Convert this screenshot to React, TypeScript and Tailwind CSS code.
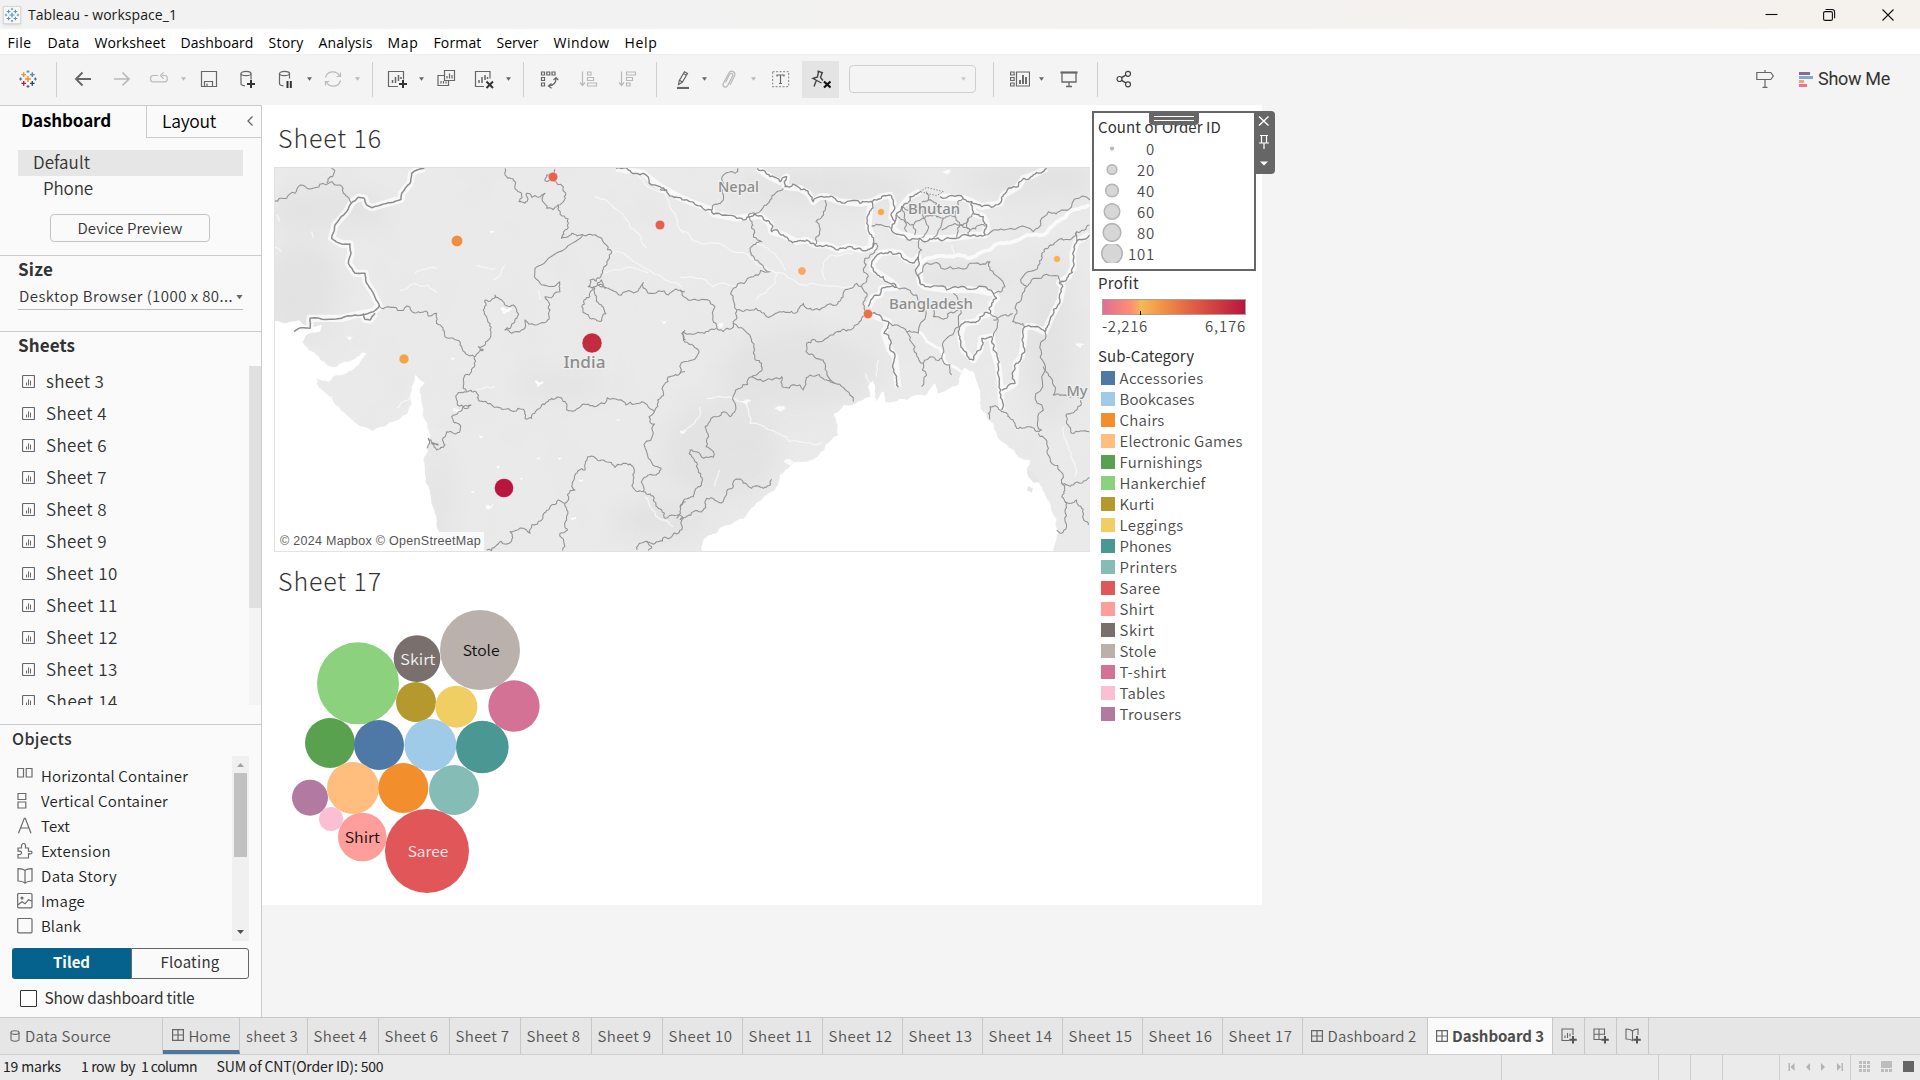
import React, { useLayoutEffect, useRef, useState } from "react";

/* ---------- text helper: tracks a label out to a given advance width ---------- */
function Fit({ w, children, className = "" }: { w: number; children: string; className?: string }) {
  const ref = useRef<HTMLSpanElement>(null);
  const [ls, setLs] = useState<number | null>(null);
  useLayoutEffect(() => {
    if (ref.current && ls === null) {
      const natural = ref.current.getBoundingClientRect().width;
      setLs((w - natural) / children.length);
    }
  }, [ls, w, children]);
  return (
    <span ref={ref} className={"inline-block whitespace-pre " + className} style={{ letterSpacing: ls === null ? undefined : ls + "px" }}>
      {children}
    </span>
  );
}

const TABLEAU = "font-['Noto_Sans_CJK_SC','Noto_Sans',sans-serif]";
const SEGOE = "font-['Open_Sans','Noto_Sans',sans-serif]";

/* ---------- icons ---------- */
function Ico({ children, c = "#666", className = "" }: { children: React.ReactNode; c?: string; className?: string }) {
  return (
    <svg width="20" height="20" viewBox="0 0 20 20" fill="none" stroke={c} strokeWidth="1.2" className={"shrink-0 " + className}>
      {children}
    </svg>
  );
}
function Caret({ className = "", c = "#666" }: { className?: string; c?: string }) {
  return (
    <svg width="7" height="4" viewBox="0 0 7 4" className={"shrink-0 " + className}>
      <path d="M1 0.3h5L3.5 3.7z" fill={c} />
    </svg>
  );
}
function Sep({ className = "" }: { className?: string }) {
  return <div className={"h-[35px] w-px shrink-0 bg-[#cfcfcf] " + className} />;
}
function Plus({ x, y, r, c, w = 1.4 }: { x: number; y: number; r: number; c: string; w?: number }) {
  return <path d={`M${x - r} ${y}h${r * 2}M${x} ${y - r}v${r * 2}`} stroke={c} strokeWidth={w} />;
}
function TableauMark({ mono = false }: { mono?: boolean }) {
  const p = (c: string) => (mono ? "#5b97bd" : c);
  return (
    <>
      <Plus x={10} y={10} r={3} c={p("#eb912b")} w={1.5} />
      <Plus x={5.7} y={5.6} r={2.3} c={p("#eb912b")} />
      <Plus x={14.3} y={5.6} r={2.3} c={p("#59879b")} />
      <Plus x={5.7} y={14.4} r={2.3} c={p("#c72035")} />
      <Plus x={14.3} y={14.4} r={2.3} c={p("#1f447e")} />
      <Plus x={10} y={2.6} r={1.5} c={p("#7099a6")} w={1.1} />
      <Plus x={10} y={17.4} r={1.5} c={p("#5b6591")} w={1.1} />
      <Plus x={2.6} y={10} r={1.5} c={p("#5c6692")} w={1.1} />
      <Plus x={17.4} y={10} r={1.5} c={p("#5c6692")} w={1.1} />
    </>
  );
}

function TitleBar() {
  return (
    <div className="flex h-[29px] shrink-0 items-center bg-gradient-to-r from-[#f2f2f2] from-30% to-[#f5f1ed]">
      <div className="ml-[3px] flex h-[18px] w-[18px] items-center justify-center border border-[#d8d8d8] bg-[#f7f7f7] shadow-sm">
        <svg width="16" height="16" viewBox="0 0 20 20"><TableauMark mono /></svg>
      </div>
      <div className={"ml-[7px] text-[14px] leading-[28px] text-[#191919] " + SEGOE}><Fit w={149}>Tableau - workspace_1</Fit></div>
      <svg className="ml-auto mr-[25px]" width="130" height="14" viewBox="0 0 130 14" fill="none" stroke="#111" strokeWidth="1.1">
        <path d="M0.5 6.5h12" />
        <rect x="58.6" y="3.6" width="8.8" height="8.8" rx="1.5" />
        <path d="M60.6 1.5h6.4q2.6 0 2.6 2.6v6.2" />
        <path d="M117.5 1.5l11 11M128.5 1.5l-11 11" />
      </svg>
    </div>
  );
}

const menus: [string, number][] = [
  ["File", 24], ["Data", 32], ["Worksheet", 71], ["Dashboard", 73], ["Story", 35], ["Analysis", 54],
  ["Map", 31], ["Format", 48], ["Server", 42], ["Window", 56], ["Help", 33],
];
const menuSlots = ["w-[40px]", "w-[47px]", "w-[86px]", "w-[88px]", "w-[50px]", "w-[69px]", "w-[46px]", "w-[63px]", "w-[57px]", "w-[71px]", "w-[60px]"];

function MenuBar() {
  return (
    <div className={"flex h-[25px] shrink-0 items-center bg-white pl-[7.5px] pt-[2px] text-[14px] leading-[23px] text-black " + SEGOE}>
      {menus.map(([t, w], i) => (
        <div key={t} className={"shrink-0 " + menuSlots[i]}><Fit w={w}>{t}</Fit></div>
      ))}
    </div>
  );
}

function Toolbar() {
  const off = "#b9b9b9";
  return (
    <div className="flex h-[51px] shrink-0 items-center border-t border-[#ededed] bg-[#f4f4f4] pb-[2px]">
      <Ico className="ml-[18px]"><TableauMark /></Ico>
      <Sep className="ml-[18px]" />
      <Ico className="ml-4"><path d="M18 10H3M9.5 3.5L3 10l6.500 6.500" strokeWidth="1.9" /></Ico>
      <Ico className="ml-[19px]" c={off}><path d="M2 10h15M10.500 3.500L17 10l-6.500 6.500" strokeWidth="1.7" /></Ico>
      <Ico className="ml-[17px]" c={off}><path d="M9 6h-5q-2.500 0-2.500 3.200t2.500 3.200h12q2.300 0 2.300-3.200t-2.300-3.200h-3M14.500 9.300L11.500 6l3-3.200" transform="translate(0 .5)" /></Ico>
      <Caret className="ml-[11px]" c={off} />
      <Ico className="ml-3"><path d="M2.500 2.500h15v15h-15zM5.500 17.500v-5h8v5M8 17v-2.500" /></Ico>
      <Ico className="ml-[19px]"><ellipse cx="8" cy="4.500" rx="5" ry="2.200" /><path d="M3 4.500v10q0 2 4 2.300M13 4.500v6" /><path d="M13 11v8M9 15h8" stroke="#333" strokeWidth="2" /></Ico>
      <Ico className="ml-[17px]"><ellipse cx="9.500" cy="4.500" rx="5" ry="2.200" /><path d="M4.500 4.500v10q0 2 4 2.300M14.500 4.500v5" /><path d="M12.500 12v7M15.800 12v7" stroke="#333" strokeWidth="2" /></Ico>
      <Caret className="ml-[11px]" />
      <Ico className="ml-[10px]" c={off}><path d="M2.500 8.500a7.500 7.500 0 0 1 14-1.500M17.500 3.500v4h-4M17.500 11.500a7.500 7.500 0 0 1-14 1.500M2.500 16.500v-4h4" /></Ico>
      <Caret className="ml-[11px]" c={off} />
      <Sep className="ml-[11px]" />
      <Ico className="ml-[14px]"><path d="M11 17.500h-9.500v-15h15v8" /><path d="M5.500 14v-3M8.500 14V8M11.500 12V6M14 10V8" strokeWidth="1.500" /><path d="M16 11v8M12 15h8" stroke="#333" strokeWidth="2" /></Ico>
      <Caret className="ml-[11px]" />
      <Ico className="ml-[11px]"><path d="M8.500 1.500h10v10h-10zM8.500 6.500h-6.500v10h10.500v-5" /><path d="M11 9.500v-2.500M13.500 9.500v-5M16 9.500v-3.500M5 14.500v-2.500M7.500 14.500v-2.500M10 14.500v-2" strokeWidth="1.200" /></Ico>
      <Ico className="ml-[18px]"><path d="M10 17.500h-8.500v-15h14.500v7" /><path d="M5 14v-3M8 14V8M11 11V6M13.500 10V8" strokeWidth="1.500" /><path d="M12.500 12.500l6.500 6.500M19 12.500l-6.500 6.500" stroke="#333" strokeWidth="2" /></Ico>
      <Caret className="ml-[11px]" />
      <Sep className="ml-[11px]" />
      <Ico className="ml-[15px]"><path d="M2.500 3h3v3h-3zM7.800 3h3v3h-3zM13 3h3v3h-3zM2.500 8.500h3v3h-3zM2.500 14h3v3h-3z" /><path d="M17 9.500q0 6.500-7 7.500M14.500 11l2.500-2.500 2.300 2.500M12.500 14.500l-3 2.500 3 2.200" /></Ico>
      <Ico className="ml-5" c={off}><path d="M3.500 2.500v14M1 13.500l2.500 3 2.500-3M8.500 3h3.500v3h-3.500zM8.500 8.500h6v3h-6zM8.500 14h9v3h-9z" /></Ico>
      <Ico className="ml-[19px]" c={off}><path d="M3.500 2.500v14M1 13.500l2.500 3 2.500-3M8.500 3h9v3h-9zM8.500 8.500h6v3h-6zM8.500 14h3.500v3h-3.500z" /></Ico>
      <Sep className="ml-[18px]" />
      <Ico className="ml-4"><path d="M4 19h12" strokeWidth="2.200" /><path d="M5.500 15.500l.8-4 5.200-8.700 3 1.700-5.200 8.800-3.800 2.200zM6.500 11.300l2.800 1.800M10.500 4.500l3 1.700" /></Ico>
      <Caret className="ml-2" />
      <Ico className="ml-[11px]" c={off}><path d="M6.500 13.500l4-8q1-1.800 2.500-1t.6 2.600l-5 9.500q-1.500 2.300-3.400 1.300t-1-3.200l5.500-10.500q1.800-3 4.500-1.600t1.300 4.500l-4.500 9" /></Ico>
      <Caret className="ml-[11px]" c={off} />
      <Ico className="ml-[13px]"><rect x="2.600" y="2.600" width="16" height="15" strokeDasharray="2 1.500" stroke="#999" /><path d="M7 7.500v-1.500h7v1.500M10.500 6v8.500M9 14.500h3" /></Ico>
      <div className="ml-3 flex h-[37px] w-[37px] shrink-0 items-center justify-center bg-[#e4e4e4]">
        <Ico c="#444"><path d="M6.500 1.800l5.500 2.200M7.500 2.500l-1 5.500-4.500 1.500 8.500 4.500M11 4l-1.500 4.500 2.500 3M5.500 11l-2.500 6.500" strokeWidth="1.400" /><path d="M13 12.500l6.500 6M19.500 12.500l-6.500 6" stroke="#111" strokeWidth="2.200" /></Ico>
      </div>
      <div className="ml-[10px] flex h-[28px] w-[127px] shrink-0 items-center justify-end rounded-sm border border-[#d0d0d0] pr-2"><Caret c="#c8c8c8" /></div>
      <Sep className="ml-[17px]" />
      <Ico className="ml-4"><path d="M.6 3h3.500v3h-3.500zM.6 8.500h3.500v3h-3.500zM.6 14h3.500v3h-3.500zM6.500 3h13v14h-13z" /><path d="M10 15v-4M13 15v-9M16 15v-7" strokeWidth="1.900" /></Ico>
      <Caret className="ml-2" />
      <Ico className="ml-[14px]"><path d="M1.500 3.500h17" strokeWidth="2.200" /><path d="M3 4v9h14v-9M10 13v4.500M7 17.500h6" strokeWidth="1.300" /></Ico>
      <Sep className="ml-[18px]" />
      <Ico className="ml-4" c="#444"><circle cx="5.500" cy="10" r="2.500" /><circle cx="14" cy="4.800" r="2.500" /><circle cx="14" cy="15.300" r="2.500" /><path d="M7.700 8.700l4-2.600M7.700 11.300l4.100 2.600" strokeWidth="1.400" /></Ico>
      <Ico className="ml-auto"><path d="M1.800 3.500h14l2.500 3.500-2.500 3.500h-14zM10 1v2.500M10 10.500v7.500M7.500 18.300h5" /></Ico>
      <svg className="ml-6 shrink-0" width="14" height="16" viewBox="0 0 14 16"><path d="M0 1h11v3H0z" fill="#856a94" /><path d="M0 5h14v3H0z" fill="#86a5cf" /><path d="M0 9h5v3H0z" fill="#f0a37c" /><path d="M0 13h8v3H0z" fill="#f7707f" /></svg>
      <div className="ml-[5px] mr-[30px] font-['Roboto',sans-serif] text-[18px] leading-6 text-[#333]"><Fit w={72}>Show Me</Fit></div>
    </div>
  );
}

/* ---------- side panel ---------- */
const sheets = ["sheet 3", "Sheet 4", "Sheet 6", "Sheet 7", "Sheet 8", "Sheet 9", "Sheet 10", "Sheet 11", "Sheet 12", "Sheet 13", "Sheet 14"];

const objects: [string, number, React.ReactNode][] = [
  ["Horizontal Container", 147, <path d="M.7 1.500h5.800v8.500H.7zM9.200 1.500h5.800v8.500H9.200z" />],
  ["Vertical Container", 127, <path d="M1 1.500h7.800v6H1zM1 10h7.800v6H1z" />],
  ["Text", 29, <path d="M1.500 16.300L7.300 1.300h1l5.700 15M3.600 11h8.300" />],
  ["Extension", 70, <path d="M1 6h3.500q-.5-4.300 2-4.500t2 4.500h3v3.500q3.500-.8 3.500 1t-3.500 1.200v4.300H1v-3.500q3.500.3 3.500-1.700T1 9.200z" />],
  ["Data Story", 76, <path d="M8 3.700v12.500M8 3.700q-2-2-7-2v12.300q5 .2 7 2.200q2-2 7-2.200V1.700q-5 0-7 2z" />],
  ["Image", 44, <><rect x=".7" y="1.500" width="14.300" height="14.300" rx="1" /><path d="M1 12.800l4-3 3 2 3.500-4 3.500 1.500" /><circle cx="5" cy="6" r="1" fill="#666" /></>],
  ["Blank", 40, <rect x=".7" y="1.500" width="14.300" height="14.300" rx="1" />],
];

function SidePanel() {
  return (
    <div className={"flex w-[262px] shrink-0 flex-col border-r border-t border-[#cbcbcb] bg-[#fafafa] text-[#333] " + TABLEAU}>
      <div className="flex h-[32px] shrink-0 leading-[28px]">
        <div className="w-[146px] pl-[21px] text-[17px] font-bold text-black"><Fit w={90}>Dashboard</Fit></div>
        <div className="flex flex-1 items-center border-b border-l border-[#cbcbcb] pl-[15px] text-[17.5px] font-[350] text-black">
          <Fit w={54} className="pb-px">Layout</Fit>
          <svg className="ml-auto mr-[7px] mb-[2px]" width="8" height="12" viewBox="0 0 8 12"><path d="M6.500 1.500L2 6l4.500 4.500" fill="none" stroke="#666" strokeWidth="1.300" /></svg>
        </div>
      </div>
      <div className="mx-[18px] mt-[12px] h-[26px] shrink-0 bg-[#e6e6e6] pl-[15px] text-[17px] font-[350] leading-[23px]"><Fit w={57}>Default</Fit></div>
      <div className="h-[26px] shrink-0 pl-[43px] text-[17px] font-[350] leading-[23px]"><Fit w={50}>Phone</Fit></div>
      <div className="ml-[50px] mt-[12px] flex h-[28px] w-[160px] shrink-0 items-center justify-center rounded-sm border border-[#c4c4c4] text-[15px] font-[350] leading-[26px]"><Fit w={105}>Device Preview</Fit></div>
      <div className="mt-[13px] h-[76px] shrink-0 border-t border-[#cbcbcb] px-[18px]">
        <div className="h-[28px] text-[17px] font-bold leading-[26px]"><Fit w={35}>Size</Fit></div>
        <div className="flex h-[26px] items-center border-b border-[#bdbdbd] text-[15px] font-[350] leading-[24px]">
          <Fit w={214} className="ml-px pb-[2px]">Desktop Browser (1000 x 80...</Fit>
          <Caret className="ml-[3px] scale-125" />
        </div>
      </div>
      <div className="h-[35px] shrink-0 border-t border-[#cbcbcb] pl-[18px] text-[17px] font-bold leading-[26px]"><Fit w={57}>Sheets</Fit></div>
      <div className="flex h-[339px] shrink-0 overflow-hidden">
        <div className="flex-1">
          {sheets.map((s) => (
            <div key={s} className="flex h-[32px] items-center">
              <svg className="mb-px ml-[22px] mr-[11px] shrink-0" width="13" height="13" viewBox="0 0 13 13" fill="none" stroke="#666"><rect x=".5" y=".5" width="12" height="12" rx="1" strokeWidth="1.200" /><path d="M4.500 10.500v-3M6.500 10.500v-6M8.500 10.500v-5" /></svg>
              <span className="pb-[2px] text-[17px] font-[350] leading-[30px]"><Fit w={s.length > 7 ? 72 : s === "sheet 3" ? 58 : 61}>{s}</Fit></span>
            </div>
          ))}
        </div>
        <div className="w-3 bg-[#f4f4f4]"><div className="h-[242px] bg-[#e0e0e0]" /></div>
      </div>
      <div className="mt-[19px] h-[32px] shrink-0 border-t border-[#cbcbcb] pl-[12px] text-[16px] font-medium leading-[27px]"><Fit w={60}>Objects</Fit></div>
      <div className="flex h-[185px] shrink-0">
        <div className="flex-1 overflow-hidden pt-[7px]">
          {objects.map(([t, w, ic]) => (
            <div key={t} className="flex h-[25px] items-center">
              <svg className="ml-[17px] mr-2 shrink-0" width="16" height="17" viewBox="0 0 16 17" fill="none" stroke="#6b6b6b" strokeWidth="1.200">{ic}</svg>
              <span className="pb-px text-[15px] font-[350] leading-[23px] text-[#222]"><Fit w={w}>{t}</Fit></span>
            </div>
          ))}
        </div>
        <div className="mr-[12px] flex w-[17px] flex-col items-center bg-[#f0f0f0]">
          <svg width="17" height="17"><path d="M5 11h7l-3.500-4z" fill="#a3a3a3" /></svg>
          <div className="h-[84px] w-[13px] bg-[#c1c1c1]" />
          <svg className="mt-auto" width="17" height="17"><path d="M5 6h7l-3.500 4z" fill="#505050" /></svg>
        </div>
      </div>
      <div className="ml-3 mt-[7px] flex h-[31px] w-[237px] shrink-0 text-[15px] leading-[28px]">
        <div className="w-[119px] rounded-l-[3px] bg-[#05628c] text-center font-bold text-white"><Fit w={37}>Tiled</Fit></div>
        <div className="flex-1 rounded-r-[3px] border border-[#666] text-center leading-[26px]"><Fit w={59}>Floating</Fit></div>
      </div>
      <div className="mt-[9px] flex h-[20px] shrink-0 items-center">
        <div className="ml-[20px] mr-[7.5px] h-[17px] w-[17px] rounded-[1px] border border-[#333] bg-white" />
        <span className="pb-[2px] text-[15.5px] leading-[18px]"><Fit w={150}>Show dashboard title</Fit></span>
      </div>
    </div>
  );
}

/* ---------- map ---------- */
function makeRng(seed: number) {
  let s = seed;
  return () => {
    s = (s * 1103515245 + 12345) % 2147483648;
    return s / 2147483648 - 0.5;
  };
}
/* roughens a polyline by repeated midpoint displacement */
function rough(points: string, amount: number): string {
  let pts = points.split(" ").map((p) => p.split(",").map(Number));
  const rnd = makeRng(Math.round(pts[0][0] * 31 + pts[0][1] * 17 + pts.length) + 9000);
  for (let k = 0; k < 3; k++) {
    const out: number[][] = [];
    for (let i = 0; i < pts.length - 1; i++) {
      const [x1, y1] = pts[i];
      const [x2, y2] = pts[i + 1];
      out.push(pts[i]);
      const d = Math.hypot(x2 - x1, y2 - y1);
      if (d > 7) {
        const o = rnd() * d * amount;
        out.push([(x1 + x2) / 2 - ((y2 - y1) / d) * o, (y1 + y2) / 2 + ((x2 - x1) / d) * o]);
      }
    }
    out.push(pts[pts.length - 1]);
    pts = out;
  }
  return pts.map((p) => p[0].toFixed(1) + "," + p[1].toFixed(1)).join(" ");
}

const westBorders = [
  "28,275 65,265 105,225 165,222 200,215 225,225 235,250 258,278", "200,175 203,200 185,220",
  "343,588 370,590 425,588 460,605 490,618 515,610 530,650 550,685 590,710 628,740 630,765 600,795 605,845",
  "628,740 655,720 640,710 670,690 675,640 658,610 660,570 690,555 710,570 745,585 755,605 745,640 720,660 740,670 780,630 840,638 855,600 840,560 885,545 885,515",
  "955,375 920,370 890,385 900,360 910,340 880,300 878,285",
  "720,175 725,200 750,225 770,250 762,275 780,280 785,250 820,262 840,250 845,295 878,285 898,270 895,230 865,210 840,212 845,195 870,178",
  "955,375 1010,385 1040,425 1025,455 1008,500 975,510 970,530 990,530 1010,510 1020,535 1000,525 1040,540 1100,545 1135,518 1150,550 1210,555 1260,545",
  "985,530 975,560 957,570 960,610 975,625 1010,632 1023,610 1010,585 990,555 985,530",
  "605,845 575,855 578,885 618,885 580,905 560,920 585,945 575,970 545,965 540,1005 515,1020 500,1000 520,1005 490,985 485,1015",
  "605,845 632,845 640,870 680,885 715,898 775,898 780,925 800,925 830,885 860,865 890,865 905,900 950,885 1000,885 1060,870 1110,882 1130,875 1168,905",
  "1260,785 1240,795 1210,800 1195,850 1178,870 1168,905 1152,920 1165,970 1150,1045 1188,1075 1180,1090 1150,1095 1135,1145 1110,1140 1108,1080 1090,1065 1050,1072 1010,1050 968,1040 960,1080 930,1095 920,1130 930,1140 900,1180 880,1170 850,1200 830,1230 800,1245 795,1270 735,1265 733,1300 690,1310 665,1320",
  "900,1180 905,1230 908,1260 885,1270 893,1322",
  "1135,1145 1165,1170 1190,1200 1200,1225 1255,1225 1250,1245 1220,1280 1180,1295 1160,1300 1120,1305 1115,1320",
  "1260,660 1250,670 1262,690", "1235,1225 1245,1190 1262,1175", "1145,1295 1160,1310 1150,1322",
];
const westSmooth = ["885,515 870,528 830,525 808,500 810,475 850,445 930,395 955,375"];
const westFrontier = [
  "478,175 455,180 440,190 435,220 410,250 408,268 370,278 320,293 305,285 298,265 280,262 260,278 245,305 210,345 200,385 230,402 255,402 258,430 250,460 270,490 300,490 303,515 325,550 343,588 325,605 270,615 230,625 135,625 135,655 100,656 88,665",
  "295,610 300,628 315,630 330,610",
];
const eastBorders = [
  "175,55 165,70 125,85 130,150 100,165 95,180", "310,115 270,150 240,185 205,200", "435,150 430,185 408,215 420,240 405,285",
  "575,230 605,225 635,235", "915,255 970,240 1060,245 1105,185 1150,180 1230,150",
  "1228,225 1190,245 1150,270 1110,285 1085,310 1080,340 1025,385 1040,410", "1190,245 1190,275",
  "1040,410 1065,385 1135,378 1138,398", "1040,410 1010,460 998,515 1035,530",
  "720,400 730,350 760,340 830,355 870,340 930,335 930,360 975,410 940,430", "720,268 725,300 715,320",
  "930,490 940,560", "940,510 970,495 998,490", "650,412 710,435 715,550 680,545",
  "625,515 680,545 705,590 730,640 725,710", "730,640 750,620 785,625 815,675", "785,625 795,570 835,510 820,430",
  "740,445 760,500 800,505 835,480",
  "205,200 215,235 245,275 210,295 225,330 270,365 220,380 160,415 170,480",
  "170,480 215,480 260,500 300,485 345,490 370,460 400,480 470,465 490,430 530,400 545,410",
  "590,280 580,310 555,325 550,360 565,380 545,410 555,450 555,480 545,505 510,540 470,545 420,575 380,580 378,605 400,615 435,640 465,700 510,735 520,755",
  "0,420 50,450 105,470 108,520 130,545 155,535 160,515 170,480", "108,535 60,548 10,545 10,570 55,600 50,620 0,670",
  "160,520 215,575 220,610 245,640 215,680 285,685 305,680 310,712 370,720 390,675 440,690 465,700",
  "215,680 180,715 165,760 150,800 100,800 75,830 78,890 100,905 100,922 50,905 30,900 35,920 55,960 60,1010 40,1040 0,1070",
  "0,1110 40,1085 70,1080 80,1045 130,1055 140,1025 160,1010 160,995 185,990 215,1015 250,1015 275,988",
  "1095,545 1083,600 1085,680 1090,780 1085,840 1070,845 1050,830 1010,835 990,805 965,785 930,770 925,790 930,808",
  "1075,850 1100,880 1115,940 1145,1000 1145,1040 1160,1060 1155,1110 1145,1150 1130,1140",
  "1145,1000 1180,1005 1228,982", "1155,1055 1190,1050 1210,1090 1225,1125",
  "1090,650 1110,680 1120,735 1160,738 1200,745 1190,780 1158,795 1160,820 1175,850 1228,845",
  "665,170 690,180 720,165 730,205 700,225 675,215 665,170", "720,165 745,150 770,160 765,195 730,205 745,235 725,262",
  "765,195 790,205 780,235 760,262", "700,225 705,255", "675,215 680,245", "650,195 675,215", "790,205 825,200 835,165 850,145", "825,200 840,225 830,262",
  "840,225 865,205 880,190", "865,205 870,240 900,225 918,228", "785,240 840,225 870,240 865,258", "745,150 740,125",
];
const eastFrontier = [
  "-60,118 -40,120 0,143 30,155 95,180 100,192 170,205 205,200 240,197 270,220 275,245 310,255 350,275 380,270 405,285 440,285 475,300 505,290 545,300 575,295 590,280",
  "-192,55 -150,62 -110,70 -60,110 -40,120",
  "232,55 270,80 300,95 320,80 315,110 360,115 385,130 400,155 420,140 440,140 480,155 540,160 575,155 605,140 630,135 640,160 635,200 645,215",
  "575,155 568,190 565,230 575,255 575,295",
  "720,125 690,140 665,170 650,190 645,215 635,235 665,255 720,265 760,265 810,265 880,255 915,255 920,225 910,200 880,190 875,155 850,145 780,140",
  "875,155 905,170 960,160 970,135 1015,110 1030,85 1060,75 1100,55",
  "1228,255 1190,275 1178,310 1180,350 1165,380 1138,398 1148,410 1140,450 1110,510 1095,545 1060,530 1035,530",
  "1035,530 1030,580 1025,620 1008,640 1005,700 980,715 965,720",
  "565,470 580,440 600,435 605,415 650,412 640,400 610,380 580,360 575,340 600,310 630,305 660,310 680,330 705,335 715,320 720,400 735,410 800,420 870,418 940,430 950,445 935,460 930,490 900,500 890,515 850,520 840,560 850,600 880,630 900,600 905,565 935,560 940,600 955,650 962,720 965,780",
  "565,490 625,515 612,550 630,600 645,620 650,680 655,712",
];
const westSea = "20,635 60,640 105,632 135,655 170,645 165,665 120,680 112,695 130,720 165,750 215,770 250,755 290,728 305,732 280,765 250,785 215,795 190,815 155,803 155,820 200,865 245,915 285,948 325,962 355,950 400,930 428,910 440,880 440,830 450,795 465,810 480,818 465,835 470,880 475,920 492,965 490,1010 478,1040 480,1090 495,1150 510,1210 520,1260 530,1335 20,1335";
const eastSea = "65,1215 70,1170 110,1150 160,1120 210,1080 260,1035 300,975 350,935 420,910 455,870 475,855 470,820 462,790 490,765 530,758 570,740 565,715 580,690 590,755 610,725 615,755 640,755 680,750 740,735 765,700 770,730 800,720 835,705 845,670 855,652 880,665 895,710 900,760 920,800 950,850 980,885 1010,915 1050,930 1040,960 1060,975 1085,1010 1110,1060 1130,1110 1135,1150 1120,1215";
const westRivers = ["990,260 1040,285 1090,335 1120,370 1145,415", "1040,425 1100,450 1150,480 1200,510 1250,530", "1120,200 1200,250 1220,300 1245,360 1260,370", "405,540 450,520 490,525 515,548", "450,490 480,478 515,475", "635,468 690,475", "720,465 705,495 685,510", "1010,490 1060,480 1110,475 1150,490", "635,840 690,830", "395,895 430,870 438,850", "1140,1160 1190,1230 1225,1250", "820,540 825,570", "35,315 42,335", "140,365 145,385", "30,410 50,425"];
const eastRivers = ["0,240 60,280 150,300 220,330 270,360 290,370 285,400 230,450", "285,370 340,390 420,405 520,410", "230,280 290,320 315,360", "520,310 450,315 430,340 435,390", "200,760 210,820 270,840 330,875 425,878", "0,850 30,830 60,770", "80,745 190,755", "1150,830 1160,880 1185,940 1185,980", "0,380 50,385 100,410 180,412", "815,285 820,320", "595,630 590,680", "555,670 570,700", "120,960 105,1010"];
const lakes = [[255, 682, 9], [725, 600, 12], [820, 820, 10], [580, 900, 9], [675, 1190, 8], [700, 1070, 6], [650, 980, 5], [925, 1225, 6], [1255, 965, 7], [680, 365, 5], [885, 1045, 4], [1060, 930, 4], [770, 1105, 5], [565, 745, 4], [820, 1045, 4], [950, 1110, 5], [1200, 635, 8], [625, 1145, 4], [200, 860, 3]];
const eastLakes = [[200, 755, 11], [300, 775, 11], [1200, 585, 9], [120, 525, 9], [800, 65, 9], [330, 935, 13]];

const marks: [number, number, number, string][] = [
  [553, 177, 4.8, "#e9634a"], [457, 241, 5.8, "#ee8f44"], [404, 359, 5, "#f1a44b"], [592, 343, 10, "#c22c3f"], [504, 488, 9.6, "#b8163f"],
  [660, 225, 4.8, "#e55f4a"], [802, 271, 4.2, "#fda466"], [881, 212, 3.5, "#f4a84a"], [868, 314, 4.7, "#ee6f46"], [1057, 259, 3.5, "#f5b24f"],
];
const places: [string, number, number, number, number][] = [
  ["India", 563.5, 367.5, 42, 17], ["Nepal", 718, 192, 41, 15], ["Bhutan", 908, 214, 52, 15], ["Bangladesh", 889, 308.5, 84, 15], ["My", 1066.5, 395.5, 21, 15],
];

function SheetMap() {
  return (
    <div className="relative ml-3 h-[385px] w-[816px] overflow-hidden border border-r-0 border-[#e2e2e2]">
      <svg width="816" height="384" viewBox="275 168 816 384" className="block">
        <defs>
          <filter id="soft" x="-50%" y="-50%" width="200%" height="200%"><feGaussianBlur stdDeviation="12" /></filter>
          <filter id="relief" x="0" y="0" width="100%" height="100%">
            <feTurbulence type="fractalNoise" baseFrequency="0.022" numOctaves="4" seed="4" />
            <feColorMatrix values="0 0 0 0 .72  0 0 0 0 .72  0 0 0 0 .72  1.200 0 0 0 -.52" />
          </filter>
        </defs>
        <rect x="270" y="160" width="830" height="400" fill="#eaeaea" />
        <g filter="url(#soft)" fill="#e3e3e3">
          <ellipse cx="300" cy="290" rx="40" ry="50" /><ellipse cx="330" cy="210" rx="60" ry="20" /><ellipse cx="830" cy="190" rx="90" ry="20" />
          <ellipse cx="800" cy="370" rx="80" ry="40" /><ellipse cx="720" cy="450" rx="60" ry="50" /><ellipse cx="1030" cy="180" rx="70" ry="20" />
          <ellipse cx="1050" cy="340" rx="25" ry="90" /><ellipse cx="440" cy="500" rx="12" ry="50" /><ellipse cx="560" cy="385" rx="50" ry="14" />
          <ellipse cx="960" cy="280" rx="50" ry="14" /><ellipse cx="660" cy="520" rx="50" ry="20" />
        </g>
        <rect x="270" y="160" width="830" height="400" filter="url(#relief)" opacity=".25" />
        <g transform="translate(265 110) scale(.33333)" fill="none" strokeLinejoin="round">
          <polygon points={rough(westSea, 0.25)} fill="#fff" />
          {lakes.map(([x, y, r], i) => <polygon key={i} points={rough(`${x - r * 1.6},${y - r * 0.5} ${x},${y - r * 0.2} ${x + r * 1.4},${y - r * 0.7} ${x + r * 0.5},${y + r * 0.5} ${x - r * 0.4},${y + r} ${x - r * 1.6},${y - r * 0.5}`, 0.7)} fill="#fff" />)}
          {westRivers.map((p) => <polyline key={p} points={rough(p, 0.3)} stroke="#f7f7f7" strokeWidth="3.5" />)}
          {westFrontier.map((p) => <polyline key={p} points={p} stroke="#fafafa" strokeOpacity=".85" strokeWidth="22" />)}
          {westBorders.map((p) => <polyline key={p} points={rough(p, 0.55)} stroke="#929292" strokeWidth="3.2" />)}
          {westSmooth.map((p) => <polyline key={p} points={rough(p, 0.15)} stroke="#929292" strokeWidth="3.2" />)}
          {westFrontier.map((p) => <polyline key={p} points={rough(p, 0.15)} stroke="#8c8c8c" strokeWidth="4.500" />)}
        </g>
        <g transform="translate(680 150) scale(.33333)" fill="none" strokeLinejoin="round">
          <polygon points={rough(eastSea, 0.3)} fill="#fff" />
          {eastLakes.map(([x, y, r], i) => <polygon key={i} points={rough(`${x - r * 1.5},${y} ${x},${y - r * 0.6} ${x + r * 1.4},${y - r * 0.3} ${x + r * 0.3},${y + r}`, 0.6)} fill="#fafafa" />)}
          <path d="M1040 962l20 5 15 25-12 8-18-18zM1045 1008l14 8-4 12-14-8z" fill="#e6e6e6" />
          {eastRivers.map((p) => <polyline key={p} points={rough(p, 0.3)} stroke="#f7f7f7" strokeWidth="3.5" />)}
          <polyline points={rough("715,345 740,325 800,320 870,325 930,300 1000,275 1090,255 1130,215 1180,180 1228,165", 0.25)} stroke="#fafafa" strokeWidth="11" />
          <polyline points={rough("715,545 740,575 780,595 800,640 850,670", 0.25)} stroke="#fafafa" strokeWidth="8" />
          {eastFrontier.map((p) => <polyline key={p} points={p} stroke="#fafafa" strokeOpacity=".85" strokeWidth="20" />)}
          {eastBorders.map((p) => <polyline key={p} points={rough(p, 0.5)} stroke="#929292" strokeWidth="3.2" />)}
          {eastFrontier.map((p) => <polyline key={p} points={rough(p, 0.45)} stroke="#8c8c8c" strokeWidth="4" />)}
          <path d="M720 125l20-13 50 13-20 12-50-12" stroke="#858585" strokeWidth="3" strokeDasharray="4 5" />
        </g>
        <g className="font-['Noto_Sans',sans-serif]" fontWeight="500" fill="#8c8c8c" stroke="#efefef" strokeWidth="2.500" paintOrder="stroke">
          {places.map(([t, x, y, w, s]) => <text key={t} x={x} y={y} fontSize={s} textLength={w} lengthAdjust="spacingAndGlyphs">{t}</text>)}
        </g>
        {marks.map(([x, y, r, c]) => <circle key={c} cx={x} cy={y} r={r} fill={c} stroke="#fff" strokeOpacity=".5" strokeWidth=".8" />)}
      </svg>
      <div className="absolute bottom-0 left-[2px] h-[19px] bg-white/75 pl-[3px] pr-[3px] font-['Liberation_Sans',Arial,sans-serif] text-[12.5px] leading-[18px] text-[#555]"><Fit w={201}>© 2024 Mapbox © OpenStreetMap</Fit></div>
    </div>
  );
}

/* ---------- packed bubbles ---------- */
const bubbles: [number, number, number, string][] = [
  [279, 370, 123, "#8cd17d"], [456, 296, 70, "#79706e"], [645, 270, 120, "#bab0ac"], [453, 426, 60, "#b6992d"], [574, 440, 63, "#f1ce63"],
  [747, 438, 77, "#d37295"], [195, 549, 75, "#59a14f"], [342, 555, 75, "#4e79a7"], [496, 555, 78, "#a0cbe8"], [652, 561, 79, "#499894"],
  [135, 713, 54, "#b07aa1"], [264, 684, 78, "#ffbe7d"], [415, 684, 75, "#f28e2b"], [567, 690, 75, "#86bcb6"], [198, 777, 36, "#fabfd2"],
  [292, 831, 73, "#ff9d9a"], [486, 873, 126, "#e15759"],
];
const bubbleLabels: [string, number, number, number, string][] = [
  ["Skirt", 406, 316, 105, "#f0f0f0"], ["Stole", 593, 289, 111, "#111"], ["Shirt", 239, 850, 106, "#111"], ["Saree", 428, 892, 122, "#f7e6e6"],
];
function BubbleChart() {
  return (
    <svg width="320" height="300" viewBox="0 120 960 900" className="ml-[3px] block">
      {bubbles.map(([x, y, r, c]) => <circle key={c} cx={x} cy={y} r={r} fill={c} />)}
      <g className={TABLEAU} fontSize="45" fontWeight="350">
        {bubbleLabels.map(([t, x, y, w, c]) => <text key={t} x={x} y={y} fill={c} textLength={w} lengthAdjust="spacingAndGlyphs">{t}</text>)}
      </g>
    </svg>
  );
}

/* ---------- legends ---------- */
const sizes: [string, number, number][] = [["0", 1.3, 9], ["20", 4.8, 18], ["40", 6.3, 18], ["60", 7.8, 18], ["80", 8.8, 18], ["101", 10.3, 27]];
const cats: [string, string, number][] = [
  ["Accessories", "bg-[#4e79a7]", 84], ["Bookcases", "bg-[#a0cbe8]", 75], ["Chairs", "bg-[#f28e2b]", 45], ["Electronic Games", "bg-[#ffbe7d]", 123],
  ["Furnishings", "bg-[#59a14f]", 83], ["Hankerchief", "bg-[#8cd17d]", 86], ["Kurti", "bg-[#b6992d]", 35], ["Leggings", "bg-[#f1ce63]", 64],
  ["Phones", "bg-[#499894]", 52], ["Printers", "bg-[#86bcb6]", 58], ["Saree", "bg-[#e15759]", 41], ["Shirt", "bg-[#ff9d9a]", 35],
  ["Skirt", "bg-[#79706e]", 35], ["Stole", "bg-[#bab0ac]", 37], ["T-shirt", "bg-[#d37295]", 47], ["Tables", "bg-[#fabfd2]", 46], ["Trousers", "bg-[#b07aa1]", 62],
];

function Legends() {
  return (
    <div className="w-[170px] shrink-0 pt-[6px] text-[15px] text-[#4a4a4a]">
      <div className="relative h-[160px] w-[164px] border-2 border-[#666] pl-[4px] pt-[4px]">
        <div className="h-[21px] leading-[20px] text-[#333]"><Fit w={123}>Count of Order ID</Fit></div>
        {sizes.map(([t, r, w]) => (
          <div key={t} className="flex h-[21px] items-center">
            <svg width="24" height="19" viewBox="0 0 24 19" className="ml-[2px] shrink-0"><circle cx="12" cy="9.500" r={r} fill="#d6d6d6" stroke="#b3b3b3" strokeWidth="1.500" /></svg>
            <div className="w-[31px] text-right font-[350] leading-[19px]"><Fit w={w}>{t}</Fit></div>
          </div>
        ))}
        <div className="absolute -top-[2px] left-[55px] flex h-[14px] w-[50px] flex-col items-center justify-center gap-[3px] rounded-b-sm bg-[#666]">
          <div className="h-px w-10 bg-white" /><div className="h-px w-10 bg-white" />
        </div>
        <div className="absolute -right-[21px] -top-[2px] h-[63px] w-[21px] rounded-r-sm bg-[#666]">
          <svg width="21" height="63" viewBox="0 0 21 63" fill="none" stroke="#fff" strokeWidth="1.400">
            <path d="M5 5.500l9.500 9M14.500 5.500l-9.500 9" />
            <path d="M6 24.500h8M7.500 24.500v7M12.500 24.500v7M5 32h10M10 32v6" strokeWidth="1.200" />
            <path d="M6 50.500h8l-4 4z" fill="#fff" stroke="none" />
          </svg>
        </div>
      </div>
      <div className="ml-[6px] mt-[3px] h-[25px] leading-[18px] text-[#333]"><Fit w={41}>Profit</Fit></div>
      <div className="relative ml-[10px] h-[16px] w-[144px] border border-[#aaa396] bg-[linear-gradient(to_right,#e26e93,#ff8f72_20%,#f5b957_27%,#f09346_42%,#e05a45_65%,#b8163f)]">
        <div className="absolute left-[37px] top-[11px] h-[4px] w-px bg-black" />
      </div>
      <div className="ml-[10px] mr-[16px] flex h-[31px] justify-between font-[350] leading-[21px]"><Fit w={46}>-2,216</Fit><Fit w={41}>6,176</Fit></div>
      <div className="ml-[6px] h-[22px] leading-[19px] text-[#333]"><Fit w={96}>Sub-Category</Fit></div>
      {cats.map(([t, c, w]) => (
        <div key={t} className="flex h-[21px] items-center pl-[9px]">
          <div className={"mb-px mr-[4.5px] h-[14px] w-[14px] shrink-0 " + c} />
          <div className="pb-[2px] font-[350] leading-[19px]"><Fit w={w}>{t}</Fit></div>
        </div>
      ))}
    </div>
  );
}

/* ---------- bottom bars ---------- */
function GridIcon({ c = "#666" }: { c?: string }) {
  return <svg width="12" height="12" viewBox="0 0 12 12" fill="none" stroke={c} strokeWidth="1.200" className="mb-px shrink-0"><path d="M.6.600h10.800v10.800H.6zM6 .600v10.800M.6 6h10.800" /></svg>;
}
const wide = ["Sheet 10", "Sheet 11", "Sheet 12", "Sheet 13", "Sheet 14", "Sheet 15", "Sheet 16", "Sheet 17"];
function TabBar() {
  const tab = "flex h-full shrink-0 items-center border-r border-[#c8c8c8] ";
  return (
    <div className={"flex h-[37px] shrink-0 border-t border-[#c8c8c8] bg-[#e6e6e6] text-[15px] font-[350] leading-[34px] text-[#555] " + TABLEAU}>
      <div className={tab + "w-[163px] pl-[10px]"}>
        <svg width="10" height="12" viewBox="0 0 10 12" fill="none" stroke="#666" strokeWidth="1.100" className="mb-px"><ellipse cx="5" cy="2.600" rx="4" ry="1.800" /><path d="M1 2.600v7q0 1.600 4 1.600t4-1.600v-7" /></svg>
        <Fit w={86} className="ml-[5px]">Data Source</Fit>
      </div>
      <div className={tab + "w-[77px] border-b-4 border-b-[#4f779c] pl-[9px] pt-[3px]"}><GridIcon /><Fit w={42} className="ml-[4.5px]">Home</Fit></div>
      <div className={tab + "w-[68px] pl-[6px]"}><Fit w={52}>sheet 3</Fit></div>
      {["Sheet 4", "Sheet 6", "Sheet 7", "Sheet 8", "Sheet 9"].map((s) => <div key={s} className={tab + "w-[71px] pl-[5.5px]"}><Fit w={54}>{s}</Fit></div>)}
      {wide.map((s) => <div key={s} className={tab + "w-[80px] pl-[5.5px]"}><Fit w={64}>{s}</Fit></div>)}
      <div className={tab + "w-[125px] pl-[8px]"}><GridIcon /><Fit w={89} className="ml-[4.5px]">Dashboard 2</Fit></div>
      <div className={tab + "w-[125px] bg-[#fafafa] pl-[8px] font-bold text-[#4d4d4d]"}><GridIcon /><Fit w={92} className="ml-1">Dashboard 3</Fit></div>
      {[0, 1, 2].map((i) => (
        <div key={i} className={tab + "w-[32px] justify-center"}>
          <svg width="16" height="16" viewBox="0 0 16 16" fill="none" stroke="#666" strokeWidth="1.100">
            {i === 0 && <path d="M8.500 12.500h-7.500v-11.500h11v6M4 10v-2.500M6.500 10v-5M9 8.500v-3" />}
            {i === 1 && <path d="M8.500 11.500h-7.500v-10.500h10.500v6M6 1v10.500M1 6.300h10.500" />}
            {i === 2 && <path d="M7.500 3v9.500q-2-1.500-6.500-1.500v-10q4.500 0 6.500 2q2-2 5.500-2v6" />}
            <path d="M12 8v7.500M8.300 11.800h7.500" stroke="#555" strokeWidth="2" />
          </svg>
        </div>
      ))}
    </div>
  );
}

function StatusBar() {
  return (
    <div className={"flex h-[26px] shrink-0 border-t border-[#cfcfcf] bg-[#ebebeb] pl-[3px] text-[14px] leading-[23px] text-[#222] " + TABLEAU}>
      <div className="w-[78px]"><Fit w={58}>19 marks</Fit></div>
      <div className="w-[39px]"><Fit w={34}>1 row</Fit></div>
      <div className="w-[21px]"><Fit w={15}>by</Fit></div>
      <div className="w-[75px]"><Fit w={56}>1 column</Fit></div>
      <Fit w={167} className="ml-[.5px]">SUM of CNT(Order ID): 500</Fit>
      <div className="ml-auto w-[157px] border-l border-[#cfcfcf]" />
      <div className="w-[32px] border-l border-[#cfcfcf]" />
      <div className="w-[32px] border-l border-[#cfcfcf]" />
      <div className="w-[57px] border-l border-[#cfcfcf]" />
      <div className="w-[71px] border-l border-[#cfcfcf]">
        <svg width="70" height="25" viewBox="0 0 70 25" fill="#b3b3b3"><path d="M8.500 8h1.400v8H8.500zM14.500 8v8l-4-4zM30 8v8l-4-4zM41 8v8l4-4zM57 8v8l4-4zM61.500 8h1.400v8h-1.400z" /></svg>
      </div>
      <div className="w-[70px] border-l border-[#cfcfcf]">
        <svg width="69" height="25" viewBox="0 0 69 25" fill="#bdbdbd">
          <path d="M8 6h3v3H8zM12 6h3v3h-3zM16 6h3v3h-3zM8 10h3v3H8zM12 10h3v3h-3zM16 10h3v3h-3zM8 14h3v3H8zM12 14h3v3h-3zM16 14h3v3h-3z" />
          <path d="M30 6h11v7H30zM30 14h3v3h-3zM34 14h3v3h-3zM38 14h3v3h-3z" /><path d="M52 6h11v11H52z" fill="#666" />
        </svg>
      </div>
    </div>
  );
}

export default function App() {
  return (
    <div className="flex h-[1080px] w-[1920px] flex-col overflow-hidden bg-[#f4f4f4]">
      <TitleBar />
      <MenuBar />
      <Toolbar />
      <div className="flex min-h-0 flex-1">
        <SidePanel />
        <div className={"flex h-[800px] w-[1000px] shrink-0 bg-white " + TABLEAU}>
          <div className="w-[830px] shrink-0">
            <div className="h-[62px] pl-[16px] pt-[17px] text-[25px] font-light leading-[31px] text-[#333]"><Fit w={104}>Sheet 16</Fit></div>
            <SheetMap />
            <div className="h-[48px] pl-[16px] pt-[13px] text-[25px] font-light leading-[31px] text-[#333]"><Fit w={104}>Sheet 17</Fit></div>
            <BubbleChart />
          </div>
          <Legends />
        </div>
      </div>
      <TabBar />
      <StatusBar />
    </div>
  );
}
